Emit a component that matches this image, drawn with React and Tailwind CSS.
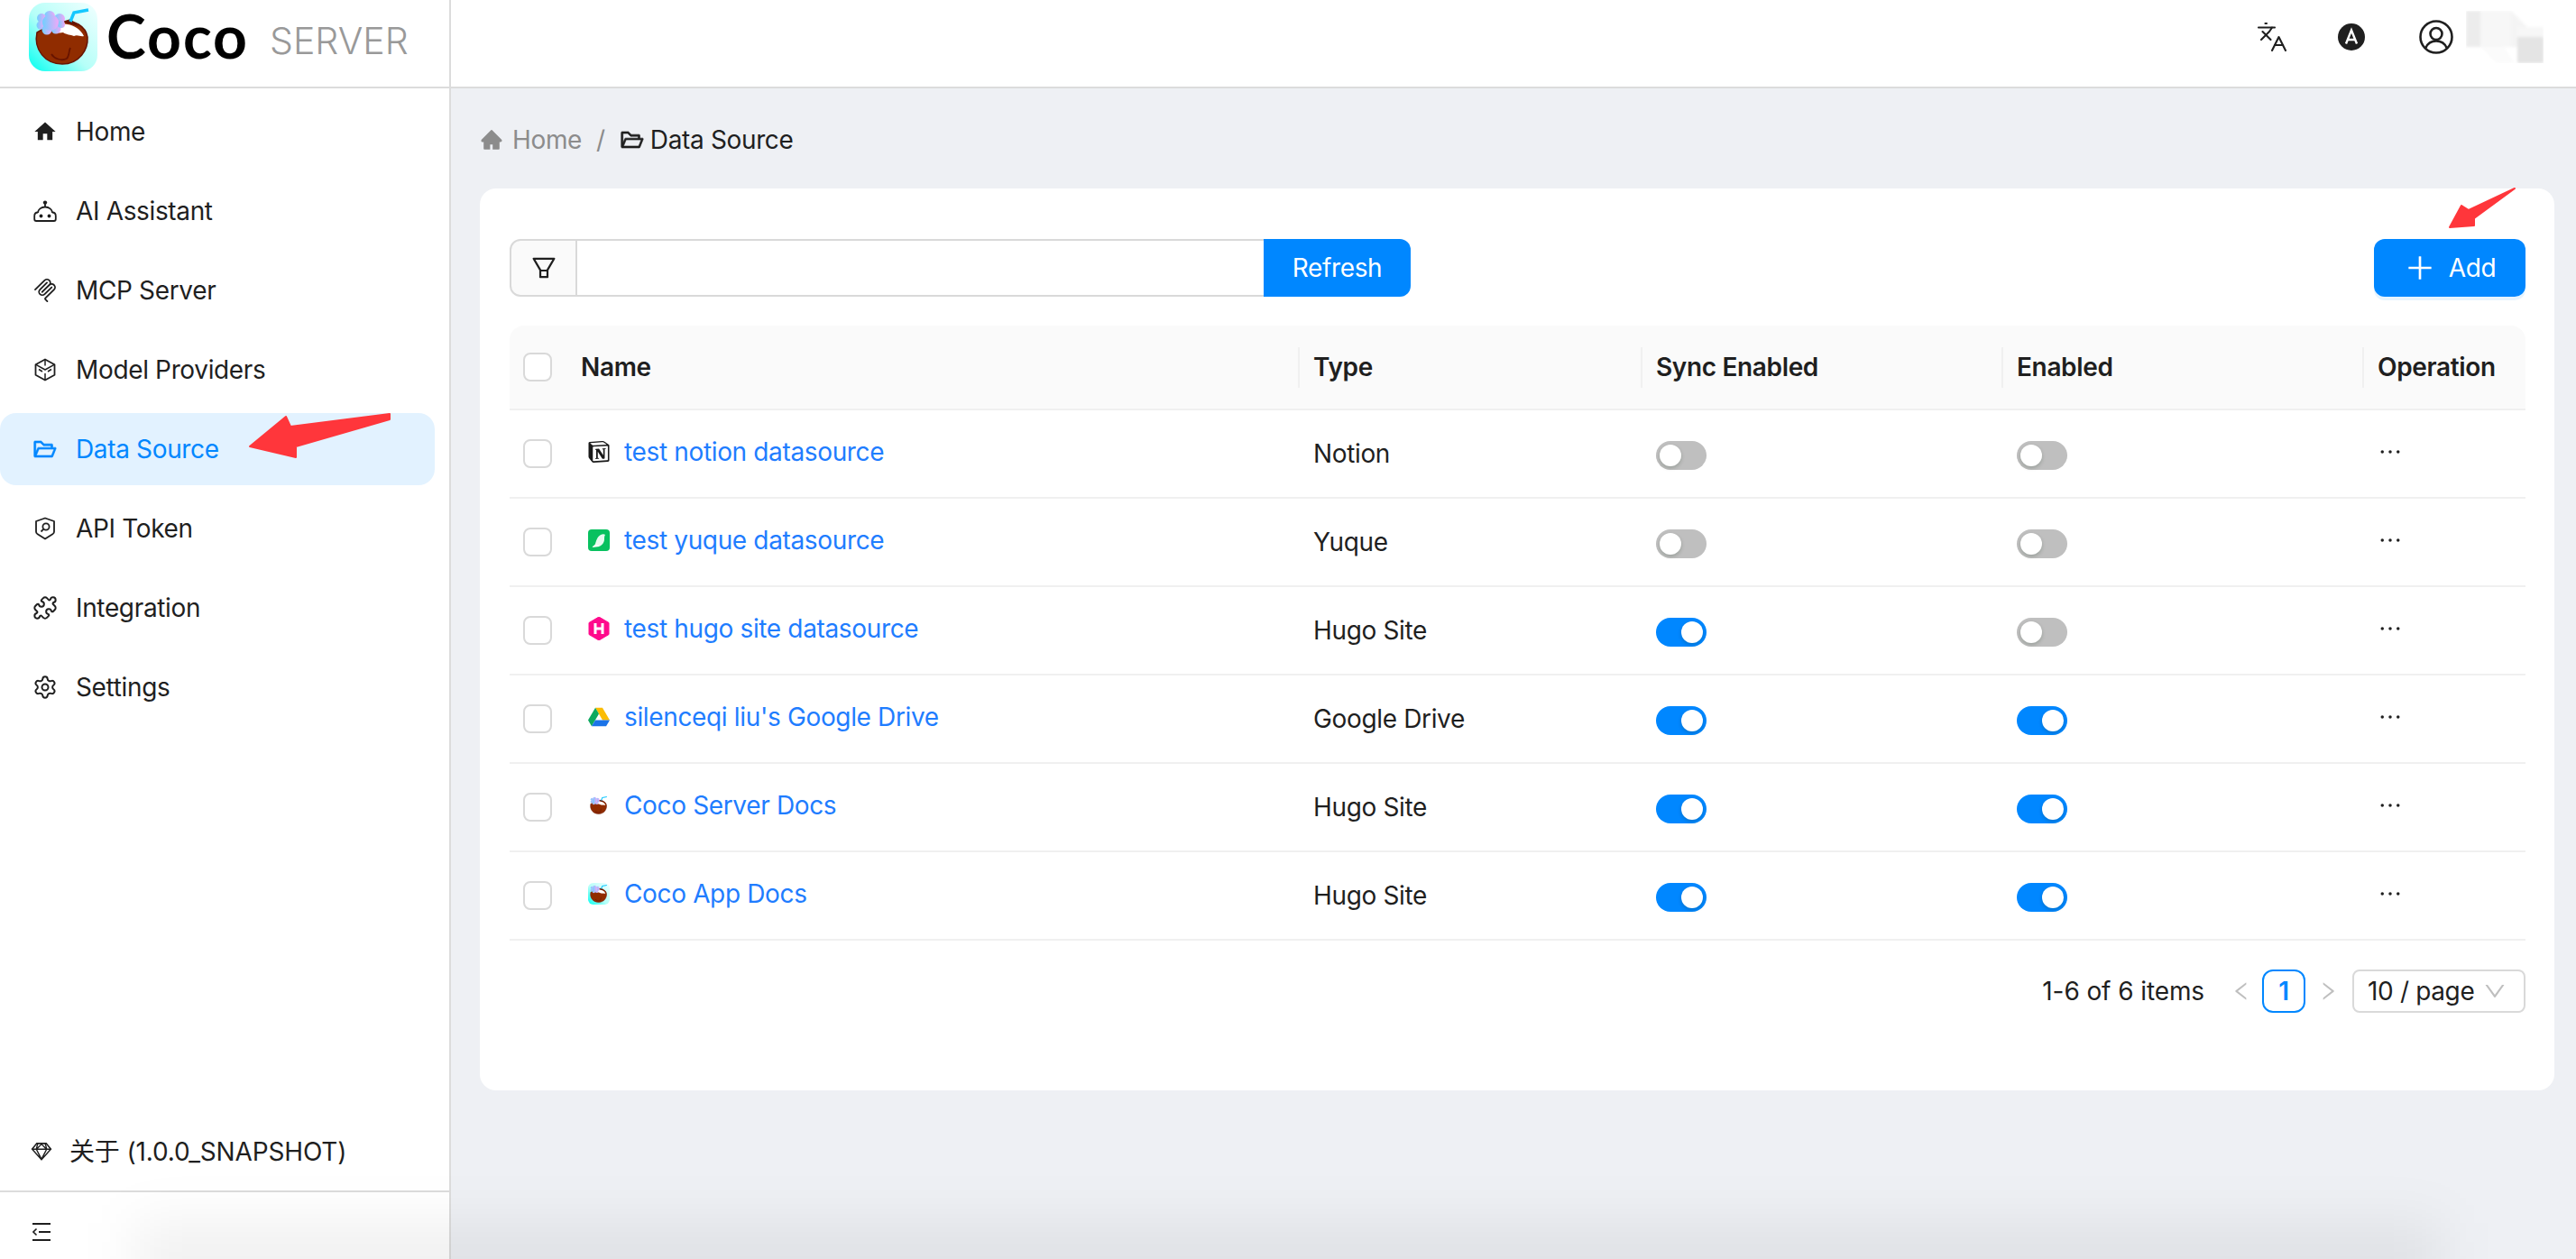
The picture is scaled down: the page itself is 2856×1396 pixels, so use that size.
import React from "react";
import { AiFillHome, AiOutlineFolderOpen, AiOutlineFilter, AiOutlinePlus, AiOutlineEllipsis, AiOutlineLeft, AiOutlineRight, AiOutlineDown, AiOutlineSketch } from "react-icons/ai";
import { MdHome } from "react-icons/md";
import { SiNotion } from "react-icons/si";
import { Languages, Puzzle, Settings } from "lucide-react";

const CocoIcon = ({ className, bg }) => (
  <svg viewBox="0 0 76 76" className={className}>
    <defs>
      <linearGradient id="cocoBg" x1="0" y1="1" x2="1" y2="0">
        <stop offset="0" stopColor="#00fff0" />
        <stop offset="0.45" stopColor="#b5fff8" />
        <stop offset="1" stopColor="#f2ffff" />
      </linearGradient>
      <linearGradient id="cocoFlower" x1="0" y1="0" x2="1" y2="0">
        <stop offset="0" stopColor="#6fd0ff" />
        <stop offset="1" stopColor="#f0a8f8" />
      </linearGradient>
    </defs>
    {bg && <rect width="76" height="76" rx="18" fill="url(#cocoBg)" />}
    <path d="M9 33C5 52 18 68 37 68C56 68 66 52 65 38C64 32 60 27 55 24L46 20L28 22Z" fill="#902c00" stroke="#671400" strokeWidth="1.5" />
    <path d="M26 30L36 23L43 24C50 25 58 30 61 37C57 38 54 35 50 37C46 35 42 36 38 33C33 34 28 33 26 30Z" fill="#fff" />
    <path d="M38 21L46 18L56 27C50 24 44 24 38 21Z" fill="#671400" />
    <path d="M25 57C28 62 36 65 42 62C45 59 44 54 46 50" fill="none" stroke="#671400" strokeWidth="1.8" />
    <path d="M46 21L50 11L66 8" fill="none" stroke="#14c8ff" strokeWidth="3.5" />
    <g fill="url(#cocoFlower)">
      <circle cx="23" cy="15" r="6" />
      <circle cx="14" cy="17" r="5" />
      <circle cx="34" cy="18" r="6" />
      <circle cx="13" cy="25" r="4.5" />
      <circle cx="20" cy="30" r="5.5" />
      <circle cx="30" cy="29" r="5.5" />
      <circle cx="36" cy="24" r="4" />
      <circle cx="24" cy="22" r="9" />
    </g>
  </svg>
);

const RobotIcon = ({ className }) => (
  <svg viewBox="0 0 26 24" fill="none" stroke="currentColor" strokeWidth="1.8" className={className}>
    <circle cx="13" cy="2.6" r="2.2" fill="currentColor" stroke="none" />
    <path d="M13 4v4" />
    <path d="M5 14a8 6.500 0 0 1 16 0" />
    <path d="M5 13.500c-2.500 0-3.800 2-3.800 4V21c0 1.200.8 2 2 2h19.600c1.200 0 2-.8 2-2v-3.500c0-2-1.300-4-3.800-4" />
    <circle cx="8.500" cy="17.500" r="1.900" fill="currentColor" stroke="none" />
    <circle cx="17.500" cy="17.500" r="1.900" fill="currentColor" stroke="none" />
  </svg>
);

const McpIcon = ({ className }) => (
  <svg viewBox="0 0 24 24" fill="currentColor" className={className}>
    <path d="M15.688 2.343a2.588 2.588 0 00-3.61 0l-9.626 9.44a.863.863 0 01-1.203 0 .823.823 0 010-1.18l9.626-9.44a4.313 4.313 0 016.016 0 4.116 4.116 0 011.204 3.54 4.3 4.3 0 013.609 1.18l.05.05a4.115 4.115 0 010 5.9l-8.706 8.537a.274.274 0 000 .393l1.788 1.754a.823.823 0 010 1.18.863.863 0 01-1.203 0l-1.788-1.753a1.92 1.92 0 010-2.754l8.706-8.538a2.47 2.47 0 000-3.54l-.05-.049a2.588 2.588 0 00-3.607-.003l-7.172 7.034-.002.002-.098.097a.863.863 0 01-1.204 0 .823.823 0 010-1.18l7.273-7.133a2.47 2.47 0 00-.003-3.537z" />
    <path d="M14.485 4.703a.823.823 0 000-1.18.863.863 0 00-1.204 0l-7.119 6.982a4.115 4.115 0 000 5.9 4.314 4.314 0 006.016 0l7.12-6.982a.823.823 0 000-1.18.863.863 0 00-1.204 0l-7.119 6.982a2.588 2.588 0 01-3.61 0 2.47 2.47 0 010-3.54l7.12-6.982z" />
  </svg>
);

const ModelIcon = ({ className }) => (
  <svg viewBox="0 0 24 26" fill="none" stroke="currentColor" strokeWidth="1.8" strokeLinejoin="round" className={className}>
    <path d="M12 1.500 22.500 7.200v11.600L12 24.500 1.500 18.800V7.200z" />
    <path d="M12 1.500v7M1.500 7.200 12 13l10.500-5.800M12 17v7.500M5 12.500 9 15M19 12.500 15 15" strokeWidth="1.500" />
  </svg>
);

const TokenIcon = ({ className }) => (
  <svg viewBox="0 0 24 26" fill="none" stroke="currentColor" strokeWidth="1.8" strokeLinejoin="round" className={className}>
    <path d="M12 1.500 22 5v11.500c0 1-.5 1.800-1.300 2.400L12 24.500 3.300 18.900c-.8-.6-1.300-1.400-1.300-2.400V5z" />
    <circle cx="13" cy="11" r="3.600" />
    <path d="M10.300 13.700 7.500 16.500" />
  </svg>
);

const CollapseIcon = ({ className }) => (
  <svg viewBox="0 0 20 20" fill="none" stroke="currentColor" className={className}>
    <path d="M0 1h20M0 19h20" strokeWidth="2" />
    <path d="M7 10h13" strokeWidth="2" />
    <path d="M4.500 6.500 1 10l3.500 3.500" strokeWidth="1.600" />
  </svg>
);

const UserIcon = ({ className }) => (
  <svg viewBox="0 0 38 38" fill="none" stroke="currentColor" strokeWidth="2.600" className={className}>
    <circle cx="19" cy="19" r="17.500" />
    <circle cx="19" cy="15.500" r="6.500" />
    <path d="M7.500 31c2-5 6-7.500 11.500-7.500S28.500 26 30.500 31" />
  </svg>
);

const AccountBadge = ({ className }) => (
  <svg viewBox="0 0 30 30" className={className}>
    <circle cx="15" cy="15" r="15" fill="#1f1f1f" />
    <path d="M9 22.500 15 7.500l6 15M11 18h8" fill="none" stroke="#fff" strokeWidth="2.400" />
  </svg>
);

const BlurredName = ({ className }) => (
  <svg viewBox="0 0 86 58" className={className}>
    <defs>
      <filter id="soft">
        <feGaussianBlur stdDeviation="1.500" />
      </filter>
    </defs>
    <g filter="url(#soft)">
      <path d="M0 0h16v40H0z" fill="#ececec" />
      <path d="M16 0h34v40H16z" fill="#f7f7f7" />
      <path d="M50 0 68 18H57v22H50z" fill="#f4f4f4" />
      <path d="M16 40h26l12 18H34z" fill="#fbfbfb" />
      <path d="M57 18h29v11H57z" fill="#f7f7f7" />
      <path d="M57 29h29v29H57z" fill="#e4e4e4" />
    </g>
  </svg>
);

const YuqueIcon = ({ className }) => (
  <svg viewBox="0 0 24 24" className={className}>
    <rect width="24" height="24" rx="4" fill="#08c15f" />
    <path d="M5 19c1-1 2-1 3-3 1-3 2-8 6-10 2-1 4-1 5 0-1 1-1 3-1 5 0 4-3 7-6 8z" fill="#e8faf0" />
    <path d="M4.500 20c1.500-2 3-3 5-3l3 2z" fill="#fff" />
  </svg>
);

const HugoIcon = ({ className }) => (
  <svg viewBox="0 0 24 26" className={className}>
    <path d="M12 0 23 6.500v13L12 26 1 19.500v-13z" fill="#ff0a8c" stroke="#ff0a8c" strokeLinejoin="round" />
    <path d="M8 7v12M16 7v12M8 13h8" fill="none" stroke="#fff" strokeWidth="3" />
  </svg>
);

const DriveIcon = ({ className }) => (
  <svg viewBox="0 0 28 24" className={className}>
    <path d="M9.400 0h9.200l9.400 16h-9.300z" fill="#fbbc04" />
    <path d="M9.400 0 0 16l4.600 8L14 8z" fill="#0da960" />
    <path d="M9.300 16H28l-4.600 8H4.600z" fill="#1a73e8" />
  </svg>
);

const RedArrow = ({ className, points, viewBox }) => (
  <svg viewBox={viewBox} className={className}>
    <polygon points={points} fill="#ff363b" stroke="#ff363b" strokeWidth="2" strokeLinejoin="round" />
  </svg>
);

const Switch = ({ on }) => (
  <div className={`mt-1 flex h-8 w-14 items-center rounded-full px-1 ${on ? "justify-end bg-[#0087ff]" : "justify-start bg-[#bfbfbf]"}`}>
    <div className="h-6 w-6 rounded-full bg-white shadow-[0_2px_4px_rgba(0,35,11,0.2)]" />
  </div>
);

const navItems = [
  { label: "Home", icon: <MdHome className="h-[30px] w-[30px]" /> },
  { label: "AI Assistant", icon: <RobotIcon className="h-6 w-[26px]" /> },
  { label: "MCP Server", icon: <McpIcon className="h-[26px] w-[26px]" /> },
  { label: "Model Providers", icon: <ModelIcon className="h-[26px] w-[24px]" /> },
  { label: "Data Source", icon: <AiOutlineFolderOpen className="h-[30px] w-[30px]" stroke="currentColor" strokeWidth={24} />, active: true },
  { label: "API Token", icon: <TokenIcon className="h-[26px] w-[24px]" /> },
  { label: "Integration", icon: <Puzzle className="h-7 w-7" strokeWidth={1.7} /> },
  { label: "Settings", icon: <Settings className="h-7 w-7" strokeWidth={1.7} /> },
];

const rows = [
  { name: "test notion datasource", type: "Notion", icon: <SiNotion className="h-6 w-6 text-[#1a1a1a]" />, sync: false, enabled: false },
  { name: "test yuque datasource", type: "Yuque", icon: <YuqueIcon className="h-6 w-6" />, sync: false, enabled: false },
  { name: "test hugo site datasource", type: "Hugo Site", icon: <HugoIcon className="h-[26px] w-6" />, sync: true, enabled: false },
  { name: "silenceqi liu's Google Drive", type: "Google Drive", icon: <DriveIcon className="h-6 w-7" />, sync: true, enabled: true },
  { name: "Coco Server Docs", type: "Hugo Site", icon: <CocoIcon className="h-7 w-7" />, sync: true, enabled: true },
  { name: "Coco App Docs", type: "Hugo Site", icon: <CocoIcon className="h-7 w-7" bg />, sync: true, enabled: true },
];

const Checkbox = () => <div className="h-8 w-8 rounded-lg border-2 border-[#d9d9d9] bg-white" />;

const HeadCell = ({ children, divider = true }) => (
  <th className="relative h-[94px] border-b-2 border-[#f0f0f0] bg-[#fafafa] px-[17px] text-left font-semibold">
    {divider && <span className="absolute left-0 top-6 h-[45px] w-0.5 bg-[#f0f0f0]" />}
    {children}
  </th>
);

const App = () => {
  return (
    <div className="relative flex h-screen flex-col overflow-hidden bg-[#eef0f4] font-['Inter','Noto_Sans_CJK_SC',sans-serif] text-[28px] leading-none tracking-[-0.35px] text-[#1f1f1f]">
      <header className="flex h-[98px] shrink-0 border-b-2 border-[#dcdcdc] bg-white">
        <div className="flex h-full w-[500px] items-start border-r-2 border-[#dcdcdc] pl-8 pt-[3px]">
          <CocoIcon className="h-[76px] w-[76px]" bg />
          <span className="ml-2.5 mt-[2px] font-['Lato',sans-serif] text-[66px] font-bold leading-[70px] tracking-[2px] text-black">Coco</span>
          <span className="ml-[23px] mt-[17px] text-[41px] font-light leading-[50px] tracking-normal text-[#999999]">SERVER</span>
        </div>
        <div className="flex flex-1 items-start justify-end pr-9 pt-3">
          <Languages className="mr-[55px] mt-[11px] h-9 w-9" strokeWidth={1.4} />
          <AccountBadge className="mr-[60px] mt-[14px] h-[30px] w-[30px]" />
          <UserIcon className="mr-3.5 mt-2.5 h-[38px] w-[38px]" />
          <BlurredName className="h-[58px] w-[86px]" />
        </div>
      </header>

      <div className="flex min-h-0 flex-1">
        <aside className="flex w-[500px] shrink-0 flex-col border-r-2 border-[#dcdcdc] bg-white">
          <nav className="flex flex-1 flex-col gap-2 pr-4 pt-2">
            {navItems.map((item) => (
              <div
                key={item.label}
                className={`flex h-20 items-center rounded-[18px] pl-9 ${item.active ? "bg-[#e2f2ff] text-[#0087ff]" : ""}`}
              >
                <span className="flex w-7 justify-center">{item.icon}</span>
                <span className="ml-[20px]">{item.label}</span>
              </div>
            ))}
          </nav>
          <div className="flex h-[90px] items-center pl-8 pt-[3px]">
            <AiOutlineSketch className="h-7 w-7" />
            <span className="ml-[17px] tracking-[-0.15px]">关于 (1.0.0_SNAPSHOT)</span>
          </div>
          <div className="flex h-[76px] items-center border-t-2 border-[#dcdcdc] pl-9 pt-3.5">
            <CollapseIcon className="h-5 w-5" />
          </div>
        </aside>

        <main className="min-w-0 flex-1 pl-8 pr-6">
          <div className="flex h-[111px] items-center pt-[3px]">
            <AiFillHome className="h-[26px] w-[26px] text-[#8c8c8c]" />
            <span className="ml-2.5 text-[#8c8c8c]">Home</span>
            <span className="mx-4 text-[#8c8c8c]">/</span>
            <AiOutlineFolderOpen className="h-7 w-7" stroke="currentColor" strokeWidth={24} />
            <span className="ml-[6px]">Data Source</span>
          </div>

          <section className="rounded-[18px] bg-white pb-[86px] pl-[33px] pr-8 pt-14">
            <div className="flex items-start justify-between">
              <div className="flex h-16">
                <div className="flex w-[75px] items-center justify-center rounded-l-xl border-2 border-[#d9d9d9] bg-[#fafafa]">
                  <AiOutlineFilter className="h-8 w-8" />
                </div>
                <div className="w-[761px] border-y-2 border-[#d9d9d9]" />
                <button className="w-[163px] rounded-r-xl bg-[#0087ff] text-white">Refresh</button>
              </div>
              <button className="flex h-16 w-[168px] items-center justify-center gap-3.5 rounded-xl bg-[#0087ff] text-white shadow-[0_4px_0_rgba(5,145,255,0.1)]">
                <AiOutlinePlus className="h-9 w-9" />
                Add
              </button>
            </div>

            <table className="mt-8 w-full table-fixed border-separate border-spacing-0">
              <colgroup>
                <col className="w-[62px]" />
                <col className="w-[812px]" />
                <col className="w-[380px]" />
                <col className="w-[400px]" />
                <col className="w-[400px]" />
                <col />
              </colgroup>
              <thead>
                <tr>
                  <th className="h-[94px] rounded-tl-2xl border-b-2 border-[#f0f0f0] bg-[#fafafa] pl-[15px] text-left">
                    <Checkbox />
                  </th>
                  <HeadCell divider={false}>Name</HeadCell>
                  <HeadCell>Type</HeadCell>
                  <HeadCell>Sync Enabled</HeadCell>
                  <HeadCell>Enabled</HeadCell>
                  <th className="relative h-[94px] rounded-tr-2xl border-b-2 border-[#f0f0f0] bg-[#fafafa] px-[17px] text-left font-semibold">
                    <span className="absolute left-0 top-6 h-[45px] w-0.5 bg-[#f0f0f0]" />
                    Operation
                  </th>
                </tr>
              </thead>
              <tbody>
                {rows.map((row) => (
                  <tr key={row.name}>
                    <td className="h-[98px] border-b-2 border-[#f0f0f0] pl-[15px]">
                      <Checkbox />
                    </td>
                    <td className="h-[98px] border-b-2 border-[#f0f0f0] pl-[25px]">
                      <div className="flex items-center pb-1">
                        <span className="flex w-6 shrink-0 justify-center">{row.icon}</span>
                        <span className="ml-4 text-[#1f7dff]">{row.name}</span>
                      </div>
                    </td>
                    <td className="h-[98px] border-b-2 border-[#f0f0f0] px-[17px]">{row.type}</td>
                    <td className="h-[98px] border-b-2 border-[#f0f0f0] px-[17px]">
                      <Switch on={row.sync} />
                    </td>
                    <td className="h-[98px] border-b-2 border-[#f0f0f0] px-[17px]">
                      <Switch on={row.enabled} />
                    </td>
                    <td className="h-[98px] border-b-2 border-[#f0f0f0] pl-[15px]">
                      <AiOutlineEllipsis className="mb-1 h-8 w-8" />
                    </td>
                  </tr>
                ))}
              </tbody>
            </table>

            <div className="mt-8 flex items-center justify-end">
              <span className="tracking-[-0.1px]">1-6 of 6 items</span>
              <AiOutlineLeft className="ml-7 h-[26px] w-[26px] text-[#bfbfbf]" />
              <div className="ml-2.5 flex h-12 w-12 items-center justify-center rounded-xl border-2 border-[#0087ff] font-semibold text-[#0087ff]">1</div>
              <AiOutlineRight className="ml-3 h-[26px] w-[26px] text-[#bfbfbf]" />
              <div className="ml-3.5 flex h-12 w-[192px] items-center justify-between rounded-lg border-2 border-[#d9d9d9] pl-[15px] pr-[18px]">
                <span>10 / page</span>
                <AiOutlineDown className="h-7 w-7 text-[#bfbfbf]" />
              </div>
            </div>
          </section>
        </main>
      </div>

      {/* annotation arrows and the screenshot's bottom shadow */}
      <RedArrow
        className="absolute left-[275px] top-[457px] h-[52px] w-[160px]"
        viewBox="275 457 160 52"
        points="432,459 432,465 328,495 328,507 277,495 317,462 322,473"
      />
      <RedArrow
        className="absolute left-[2714px] top-[207px] h-[48px] w-[76px]"
        viewBox="2714 207 76 48"
        points="2788,209 2743,242 2743,250 2716,252 2729,228 2737,233"
      />
      <div className="pointer-events-none absolute -bottom-10 left-[150px] right-[150px] h-20 bg-black/[0.06] blur-[30px]" />
    </div>
  );
};

export default App;
